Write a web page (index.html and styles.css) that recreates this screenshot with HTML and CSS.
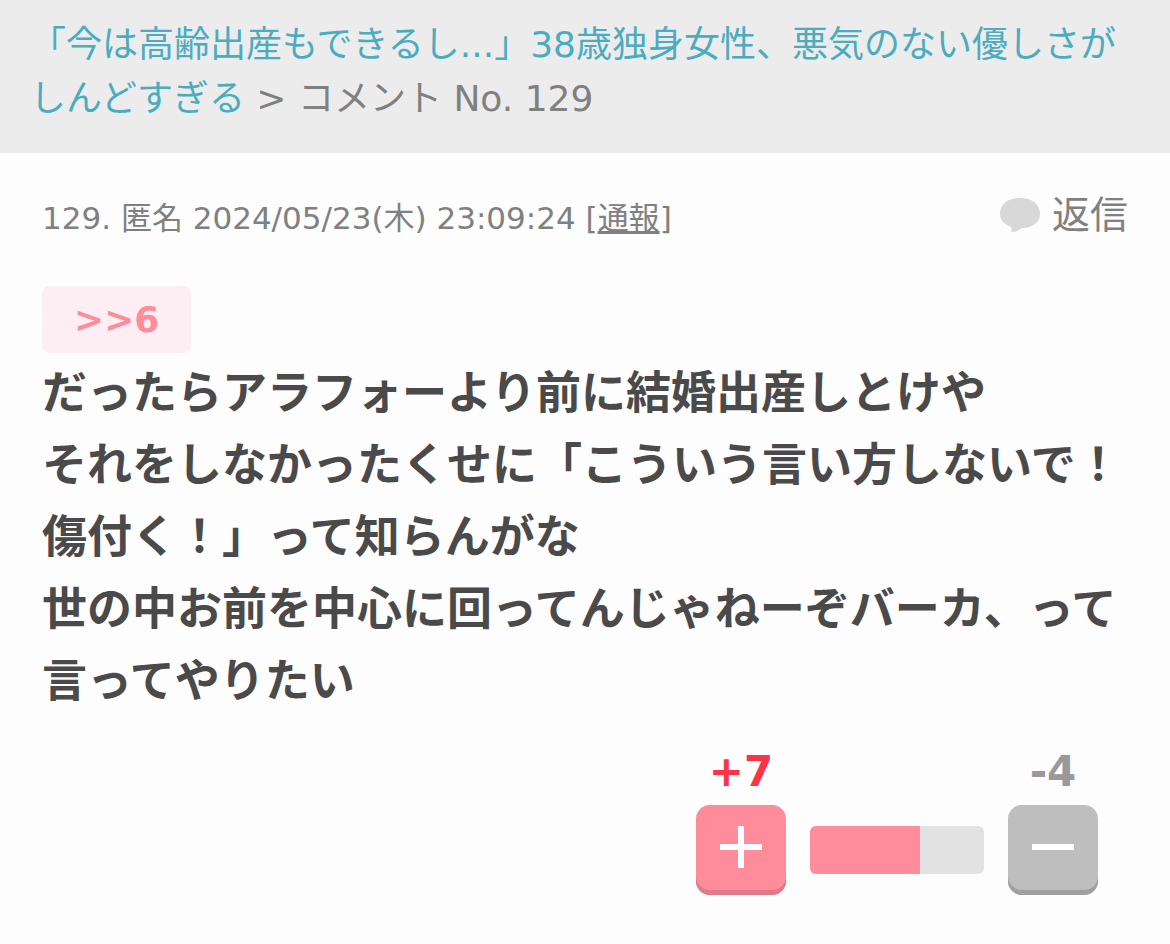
FILE: index.html
```html
<!DOCTYPE html>
<html lang="ja">
<head>
<meta charset="utf-8">
<meta name="viewport" content="width=device-width, initial-scale=1">
<title>コメント No. 129</title>
<link rel="stylesheet" href="styles.css">
</head>
<body>
<nav class="breadcrumb"><a href="#topic">「今は高齢出産もできるし...」38歳独身女性、悪気のない優しさがしんどすぎる</a> &gt; コメント No. 129</nav>
<main class="comment">
  <header class="meta">
    <p class="info">129. 匿名 2024/05/23(木) 23:09:24 [<a href="#report">通報</a>]</p>
    <a class="reply" href="#reply">
      <svg class="bubble" viewBox="0 0 40 36" aria-hidden="true"><path d="M20 1C8 1 0 7 0 17c0 6 4 10 11 13 1 2 1 4 0 5 5 0 8-2 11-4 11 0 18-6 18-14C40 7 32 1 20 1Z"/></svg>
      <span>返信</span>
    </a>
  </header>
  <a class="anchor" href="#c6">&gt;&gt;6</a>
  <p class="body">だったらアラフォーより前に結婚出産しとけや<br>それをしなかったくせに「こういう言い方しないで！傷付く！」って知らんがな<br>世の中お前を中心に回ってんじゃねーぞバーカ、って言ってやりたい</p>
  <div class="votes">
    <div class="vote plus">
      <span class="count">+7</span>
      <button type="button" aria-label="プラス"><svg viewBox="0 0 44 44" aria-hidden="true"><path d="M1 22h42M22 1v42"/></svg></button>
    </div>
    <div class="meter"><div class="fill" style="width:63%"></div></div>
    <div class="vote minus">
      <span class="count">-4</span>
      <button type="button" aria-label="マイナス"><svg viewBox="0 0 44 44" aria-hidden="true"><path d="M1 22h42"/></svg></button>
    </div>
  </div>
</main>
</body>
</html>
```

FILE: styles.css
```css
* { box-sizing: border-box; }
body {
  margin: 0;
  background: #fdfdfd;
  color: #808080;
  font-family: "DejaVu Sans", "Noto Sans CJK JP", sans-serif;
}
p { margin: 0; }
.breadcrumb {
  padding: 18px 30px 27px;
  background: #ececec;
  font-size: 36px;
  line-height: 54px;
}
.breadcrumb a { color: #4bacc0; text-decoration: none; }
.comment { padding: 34px 42px; }
.meta {
  display: flex;
  align-items: center;
  justify-content: space-between;
  height: 56px;
}
.info { font-size: 31px; }
.info a { color: inherit; }
.reply {
  display: flex;
  align-items: center;
  gap: 12px;
  color: #808080;
  font-size: 38px;
  line-height: 56px;
  text-decoration: none;
}
.bubble { width: 40px; height: 36px; fill: #d8d8d8; }
.anchor {
  display: block;
  width: fit-content;
  margin-top: 43px;
  padding: 0 32px;
  border-radius: 8px;
  background: #fceef2;
  color: #ff8c9b;
  font-size: 36px;
  font-weight: bold;
  line-height: 67px;
  text-decoration: none;
}
.body {
  margin-top: 5px;
  color: #4a4a4a;
  font-size: 45px;
  font-weight: bold;
  line-height: 72px;
}
.votes {
  display: flex;
  align-items: flex-end;
  justify-content: flex-end;
  gap: 24px;
  margin-top: 29px;
  padding-right: 30px;
}
.vote { display: flex; flex-direction: column; align-items: center; gap: 8px; }
.count { font-size: 42px; font-weight: bold; line-height: 50px; }
.plus .count { color: #ff3347; }
.minus .count { color: #999; }
.vote button {
  display: grid;
  place-items: center;
  width: 90px;
  height: 90px;
  padding: 0 0 6px;
  border: 0;
  border-radius: 14px;
}
.plus button { background: #ff8c9b; box-shadow: inset 0 -5px #e07a88; }
.minus button { background: #bebebe; box-shadow: inset 0 -5px #a0a0a0; }
.vote svg { width: 44px; height: 44px; fill: none; stroke: #fff; stroke-width: 6; }
.meter {
  width: 174px;
  height: 48px;
  margin-bottom: 21px;
  overflow: hidden;
  border-radius: 6px;
  background: #e2e2e2;
}
.fill { height: 100%; background: #ff8c9b; }
```
